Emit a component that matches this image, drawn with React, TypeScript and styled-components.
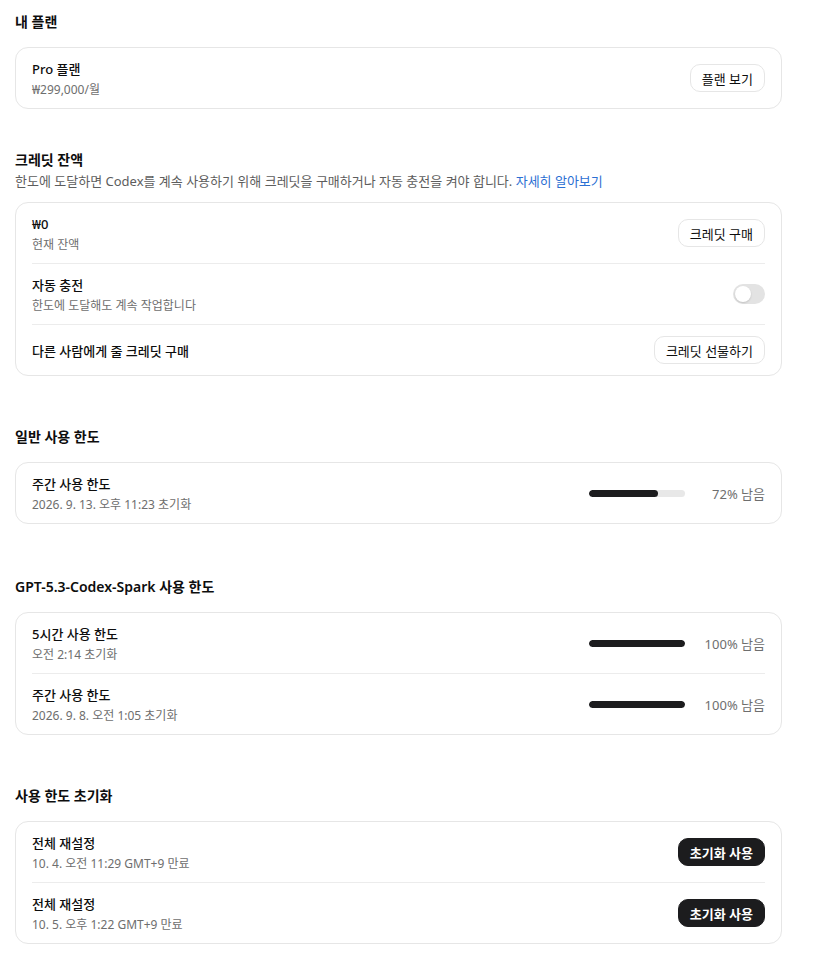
import { FC, ReactNode } from 'react';
import styled, { createGlobalStyle } from 'styled-components';

const GlobalStyle = createGlobalStyle`
    body {
        margin: 0;
        background: #ffffff;
        font-family: "Noto Sans", "Noto Sans CJK KR", sans-serif;
        color: #0d0d0d;
    }
`

const Page = styled.div`
    width: 767px;
    padding: 11px 15px 12px;
    display: flex;
    flex-direction: column;
`

const Section = styled.section<{ $space: number }>`
    margin-top: ${p => p.$space}px;
    display: flex;
    flex-direction: column;
`

const SectionHead = styled.div<{ $tight?: boolean }>`
    margin-bottom: ${p => p.$tight ? 12 : 15}px;
`

const SectionTitle = styled.h2`
    margin: 0;
    padding-top: 1px;
    font-size: 14px;
    line-height: 20px;
    font-weight: 600;
    color: #0d0d0d;
`

const Description = styled.p`
    margin: 2px 0 0;
    font-size: 13px;
    line-height: 18px;
    color: #5d5d5d;
    a {
        color: #2b6fd3;
        text-decoration: none;
    }
`

const Card = styled.div`
    border: 1px solid #e6e6e6;
    border-radius: 13px;
    background: #fff;
`

const Row = styled.div`
    margin: 0 16px;
    padding: 11px 0;
    display: flex;
    align-items: center;
    justify-content: space-between;
    & + & {
        border-top: 1px solid #ececec;
    }
`

const RowText = styled.div`
    display: flex;
    flex-direction: column;
    margin: 1px 0 -2px;
`

const RowTitle = styled.div`
    font-size: 13px;
    line-height: 19px;
    font-weight: 500;
    color: #0d0d0d;
`

const RowSub = styled.div`
    margin-top: 1px;
    font-size: 12px;
    line-height: 19px;
    color: #6e6e6e;
`

const Button = styled.button<{ $dark?: boolean }>`
    height: 28px;
    padding: 0 11px;
    border-radius: 10px;
    font-family: inherit;
    font-size: 13px;
    font-weight: ${p => p.$dark ? 700 : 400};
    cursor: pointer;
    border: 1px solid ${p => p.$dark ? '#1c1c1e' : '#e6e6e6'};
    background: ${p => p.$dark ? '#1c1c1e' : '#fff'};
    color: ${p => p.$dark ? '#fff' : '#0d0d0d'};
`

const Toggle = styled.div`
    width: 32px;
    height: 20px;
    border-radius: 10px;
    background: #e3e3e3;
    position: relative;
    &::after {
        content: '';
        position: absolute;
        top: 2px;
        left: 2px;
        width: 16px;
        height: 16px;
        border-radius: 50%;
        background: #fff;
        box-shadow: 0 1px 2px rgba(0, 0, 0, 0.15);
    }
`

const Usage = styled.div`
    display: flex;
    align-items: center;
    gap: 16px;
`

const Track = styled.div`
    width: 96px;
    height: 7px;
    border-radius: 4px;
    background: #e8e8e8;
    overflow: hidden;
`

const Fill = styled.div`
    height: 100%;
    border-radius: 4px;
    background: #1c1c1e;
`

const UsageLabel = styled.span`
    width: 64px;
    white-space: nowrap;
    text-align: right;
    font-size: 13px;
    color: #6e6e6e;
`

const Meter: FC<{ percent: number }> = ({ percent }) => (
    <Usage>
        <Track>
            <Fill style={{ width: `${percent}%` }} />
        </Track>
        <UsageLabel>{percent}% 남음</UsageLabel>
    </Usage>
)

const Item: FC<{ title: string, sub?: string, children?: ReactNode }> = ({ title, sub, children }) => (
    <Row>
        <RowText>
            <RowTitle>{title}</RowTitle>
            {sub && <RowSub>{sub}</RowSub>}
        </RowText>
        {children}
    </Row>
)

const App: FC = () => {
    return (
        <>
            <GlobalStyle />
            <Page>
                <Section $space={0}>
                    <SectionHead>
                        <SectionTitle>내 플랜</SectionTitle>
                    </SectionHead>
                    <Card>
                        <Item title="Pro 플랜" sub="₩299,000/월">
                            <Button>플랜 보기</Button>
                        </Item>
                    </Card>
                </Section>

                <Section $space={40}>
                    <SectionHead $tight>
                        <SectionTitle>크레딧 잔액</SectionTitle>
                        <Description>
                            한도에 도달하면 Codex를 계속 사용하기 위해 크레딧을 구매하거나 자동 충전을 켜야 합니다. <a href="#">자세히 알아보기</a>
                        </Description>
                    </SectionHead>
                    <Card>
                        <Item title="₩0" sub="현재 잔액">
                            <Button>크레딧 구매</Button>
                        </Item>
                        <Item title="자동 충전" sub="한도에 도달해도 계속 작업합니다">
                            <Toggle />
                        </Item>
                        <Item title="다른 사람에게 줄 크레딧 구매">
                            <Button>크레딧 선물하기</Button>
                        </Item>
                    </Card>
                </Section>

                <Section $space={50}>
                    <SectionHead>
                        <SectionTitle>일반 사용 한도</SectionTitle>
                    </SectionHead>
                    <Card>
                        <Item title="주간 사용 한도" sub="2026. 9. 13. 오후 11:23 초기화">
                            <Meter percent={72} />
                        </Item>
                    </Card>
                </Section>

                <Section $space={52}>
                    <SectionHead>
                        <SectionTitle>GPT-5.3-Codex-Spark 사용 한도</SectionTitle>
                    </SectionHead>
                    <Card>
                        <Item title="5시간 사용 한도" sub="오전 2:14 초기화">
                            <Meter percent={100} />
                        </Item>
                        <Item title="주간 사용 한도" sub="2026. 9. 8. 오전 1:05 초기화">
                            <Meter percent={100} />
                        </Item>
                    </Card>
                </Section>

                <Section $space={50}>
                    <SectionHead>
                        <SectionTitle>사용 한도 초기화</SectionTitle>
                    </SectionHead>
                    <Card>
                        <Item title="전체 재설정" sub="10. 4. 오전 11:29 GMT+9 만료">
                            <Button $dark>초기화 사용</Button>
                        </Item>
                        <Item title="전체 재설정" sub="10. 5. 오후 1:22 GMT+9 만료">
                            <Button $dark>초기화 사용</Button>
                        </Item>
                    </Card>
                </Section>
            </Page>
        </>
    )
}

export default App;
